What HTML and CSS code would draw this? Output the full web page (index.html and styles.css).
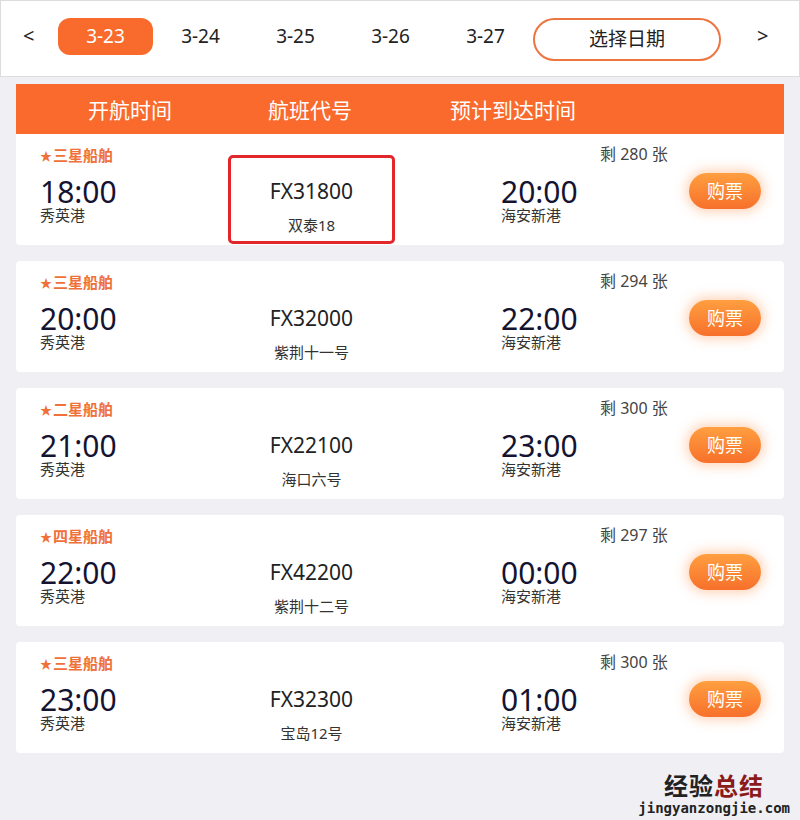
FILE: index.html
```html
<!DOCTYPE html>
<html lang="zh">
<head>
<meta charset="utf-8">
<link rel="stylesheet" href="styles.css">
</head>
<body>
<div class="topbar">
  <span class="arrow">&lt;</span>
  <div class="dates">
    <span class="date active">3-23</span>
    <span class="date">3-24</span>
    <span class="date">3-25</span>
    <span class="date">3-26</span>
    <span class="date">3-27</span>
  </div>
  <span class="pick">选择日期</span>
  <span class="arrow right">&gt;</span>
</div>

<div class="list">
  <div class="thead">
    <span class="th c1">开航时间</span>
    <span class="th c2">航班代号</span>
    <span class="th c3">预计到达时间</span>
  </div>

  <div class="card first">
    <div class="dep"><div class="star"><span class="st">★</span>三星船舶</div><div class="time">18:00</div><div class="port">秀英港</div></div>
    <div class="flight boxed"><div class="code">FX31800</div><div class="ship">双泰18</div></div>
    <div class="arr"><div class="time">20:00</div><div class="port">海安新港</div></div>
    <div class="side"><div class="left">剩 280 张</div><span class="buy">购票</span></div>
  </div>

  <div class="card">
    <div class="dep"><div class="star"><span class="st">★</span>三星船舶</div><div class="time">20:00</div><div class="port">秀英港</div></div>
    <div class="flight"><div class="code">FX32000</div><div class="ship">紫荆十一号</div></div>
    <div class="arr"><div class="time">22:00</div><div class="port">海安新港</div></div>
    <div class="side"><div class="left">剩 294 张</div><span class="buy">购票</span></div>
  </div>

  <div class="card">
    <div class="dep"><div class="star"><span class="st">★</span>二星船舶</div><div class="time">21:00</div><div class="port">秀英港</div></div>
    <div class="flight"><div class="code">FX22100</div><div class="ship">海口六号</div></div>
    <div class="arr"><div class="time">23:00</div><div class="port">海安新港</div></div>
    <div class="side"><div class="left">剩 300 张</div><span class="buy">购票</span></div>
  </div>

  <div class="card">
    <div class="dep"><div class="star"><span class="st">★</span>四星船舶</div><div class="time">22:00</div><div class="port">秀英港</div></div>
    <div class="flight"><div class="code">FX42200</div><div class="ship">紫荆十二号</div></div>
    <div class="arr"><div class="time">00:00</div><div class="port">海安新港</div></div>
    <div class="side"><div class="left">剩 297 张</div><span class="buy">购票</span></div>
  </div>

  <div class="card">
    <div class="dep"><div class="star"><span class="st">★</span>三星船舶</div><div class="time">23:00</div><div class="port">秀英港</div></div>
    <div class="flight"><div class="code">FX32300</div><div class="ship">宝岛12号</div></div>
    <div class="arr"><div class="time">01:00</div><div class="port">海安新港</div></div>
    <div class="side"><div class="left">剩 300 张</div><span class="buy">购票</span></div>
  </div>
</div>

<div class="watermark">
  <div class="wm-cn"><span class="wm-a">经验</span><span class="wm-b">总结</span></div>
  <div class="wm-en">jingyanzongjie.com</div>
</div>
</body>
</html>
```

FILE: styles.css
```css
* { box-sizing: border-box; }
html, body {
  margin: 0;
  padding: 0;
  background: #efeff4;
  font-family: "Noto Sans", "Noto Sans CJK SC", sans-serif;
  color: #222;
}
body { position: relative; width: 800px; height: 820px; overflow: hidden; }

.topbar {
  height: 77px;
  background: #fff;
  border: 1px solid #dcdcdc;
  display: flex;
  align-items: center;
}
.arrow {
  font-size: 20px;
  color: #222;
  width: 57px;
  padding-left: 22px;
  line-height: 1;
  margin-top: -6px;
}
.arrow.right { width: auto; padding-left: 36px; }
.dates {
  display: flex;
  margin-top: -4px;
}
.date {
  width: 95px;
  height: 37px;
  line-height: 37px;
  text-align: center;
  font-size: 19px;
  color: #222;
  border-radius: 12px;
}
.date.active {
  background: #f96b2c;
  color: #fff;
}
.pick {
  width: 188px;
  height: 43px;
  line-height: 39px;
  text-align: center;
  border: 2px solid #ec7540;
  border-radius: 22px;
  font-size: 19px;
  color: #222;
  margin-top: 2px;
}

.list {
  margin: 7px 16px 0;
}
.thead {
  height: 50px;
  background: #f96a2c;
  display: flex;
  align-items: center;
  color: #fff;
  font-size: 21px;
}
.th { display: block; text-align: center; }
.c1 { width: 228px; }
.c2 { width: 132px; }
.c3 { width: 274px; }

.card {
  background: #fff;
  height: 111px;
  display: grid;
  grid-template-columns: 188px 167px 1fr 184px;
  padding-left: 24px;
  margin-bottom: 16px;
  border-radius: 4px;
}
.card.first { border-radius: 0 0 4px 4px; }

.dep { padding-top: 10px; }
.star {
  color: #f0703a;
  font-size: 15px;
  font-weight: bold;
  line-height: 22px;
  height: 22px;
}
.st { font-size: 12px; line-height: 1; margin-right: 1px; }
.time {
  font-size: 30px;
  line-height: 30px;
  height: 30px;
  color: #141432;
  margin-top: 11px;
}
.port {
  font-size: 15px;
  line-height: 18px;
  color: #333;
  margin-top: -1px;
}
.flight {
  text-align: center;
  border: 3px solid transparent;
  margin-top: 21px;
  margin-bottom: 1px;
  padding-top: 19px;
}
.flight.boxed { border-color: #e3262a; border-radius: 5px; }
.code {
  font-size: 21px;
  line-height: 28px;
  color: #222;
}
.ship {
  font-size: 15px;
  line-height: 20px;
  color: #333;
  margin-top: 10px;
}
.arr {
  padding-left: 106px;
  padding-top: 32px;
}
.side {
  display: flex;
  flex-direction: column;
  padding-top: 9px;
}
.left {
  font-size: 16px;
  color: #444;
  line-height: 22px;
}
.buy {
  align-self: flex-end;
  margin-right: 23px;
  margin-top: 8px;
  width: 72px;
  height: 36px;
  line-height: 36px;
  border-radius: 18px;
  text-align: center;
  color: #fff;
  font-size: 18px;
  background: linear-gradient(#ff9f40, #f7702b);
  box-shadow: 0 0 12px 3px rgba(255, 130, 50, 0.35);
}

.watermark {
  position: absolute;
  right: 10px;
  bottom: 4px;
  text-align: right;
}
.wm-cn {
  font-size: 24px;
  font-weight: bold;
  letter-spacing: 1px;
  line-height: 28px;
  padding-right: 26px;
}
.wm-a { color: #222; }
.wm-b { color: #8b1a1a; }
.wm-en {
  font-family: "DejaVu Sans Mono", monospace;
  font-weight: bold;
  font-size: 14px;
  line-height: 16px;
  color: #222;
}
```
